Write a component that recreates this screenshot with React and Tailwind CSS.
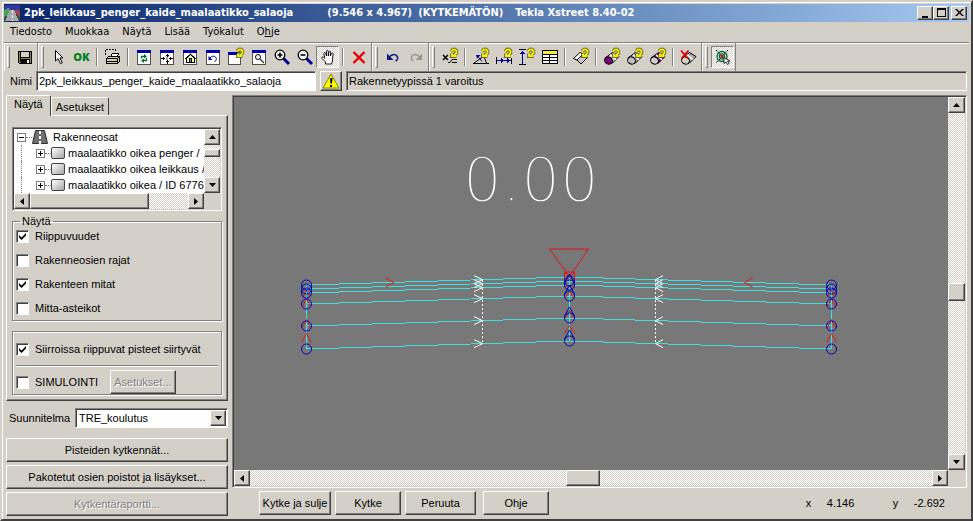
import { useState } from 'react';

const RAISED = 'border border-t-white border-l-white border-r-[#404040] border-b-[#404040] shadow-[inset_-1px_-1px_0_#808080]';
const SUNKEN = 'border border-t-[#808080] border-l-[#808080] border-r-white border-b-white shadow-[inset_1px_1px_0_#404040]';
const TRACK = 'bg-[repeating-conic-gradient(#ffffff_0_25%,#d4d0c8_0_50%)] bg-[length:2px_2px]';

/* ---------- icons ---------- */

function Icon({ children, size = 16, crisp = true }) {
  return (
    <svg
      width={size}
      height={size}
      viewBox="0 0 16 16"
      fill="none"
      stroke="#000"
      shapeRendering={crisp ? 'crispEdges' : 'auto'}
      aria-hidden="true"
      className="shrink-0 overflow-visible"
    >
      {children}
    </svg>
  );
}

// Small yellow query mark in the corner of many tool icons
function Query({ x = 8, y = 0 }) {
  const d = `M${x + 1} ${y + 2.5} L${x + 3} ${y + 0.5} H${x + 5} L${x + 6.5} ${y + 2} V${y + 4} L${x + 3.5} ${y + 7} H${x + 6.5} M${x + 2} ${y + 4.5} V${y + 7.5}`;
  return (
    <g shapeRendering="auto">
      <path d={d} stroke="#4a4a00" strokeWidth="3.4" />
      <path d={d} stroke="#f4ee10" strokeWidth="2" />
    </g>
  );
}

function WindowFrame({ children }) {
  return (
    <>
      <rect x="1.5" y="1.5" width="13" height="14" fill="#fff" stroke="#505050" />
      <rect x="1" y="1" width="14" height="3" fill="#0000a8" stroke="none" />
      {children}
    </>
  );
}

const SaveIcon = () => (
  <Icon>
    <path d="M1 2h14v13H2l-1-1z" fill="#000" stroke="none" />
    <path d="M2 3h1v10h1v1H2zM13 3h1v11h-1z" fill="#8a8a30" stroke="none" />
    <rect x="4" y="3" width="8" height="5" fill="#d4d0c8" stroke="none" />
    <rect x="4" y="9" width="9" height="1" fill="#8a8a30" stroke="none" />
    <rect x="10" y="11" width="2" height="3" fill="#fff" stroke="none" />
  </Icon>
);

const PointerIcon = () => (
  <Icon crisp={false}>
    <path d="M4.500 1.500V12l2.500-2.300 2.500 5 1.800-1-2.400-4.700H12z" fill="#fff" />
  </Icon>
);

const PrintIcon = () => (
  <Icon>
    <path d="M.5 6V.5h10V3" strokeDasharray="2 1" />
    <path d="M5.500 8 7.500 4.500h6L12 8" fill="#fff" />
    <path d="M1.500 9.500 3.500 7.500h11v5l-2 2h-11z" fill="#d4d0c8" />
    <path d="M1.500 9.500h11l2-2M12.500 9.500v5M2 12.500h10" />
    <rect x="10" y="10" width="2" height="2" fill="#e0d000" stroke="none" />
  </Icon>
);

const RefreshIcon = () => (
  <Icon>
    <WindowFrame>
      <g shapeRendering="auto" stroke="#007030" strokeWidth="1.300">
        <path d="M5.500 9.500V7.500h3M10.500 9v2.500h-3" />
        <path d="M8 5l3 2.500L8 9.500zM8 9.500l-3 2L8 14z" fill="#007030" stroke="none" />
      </g>
    </WindowFrame>
  </Icon>
);

const FitIcon = () => (
  <Icon>
    <WindowFrame>
      <path d="M8 4.500v3M8 11v4M2 9.500h4M10 9.500h4" />
      <path d="M6 7l2-2 2 2zM6 12l2 2 2-2zM5 7.500 3 9.500l2 2zM11 7.500l2 2-2 2z" fill="#000" stroke="none" />
      <path d="M6 7 10 12M10 7 6 12" stroke="#a0a0a0" strokeDasharray="1 1" />
    </WindowFrame>
  </Icon>
);

const HomeIcon = () => (
  <Icon>
    <WindowFrame>
      <path d="M4.500 9v4.500h8V9L8.500 5.500z" fill="#f0f0b0" />
      <path d="M3 10l5.500-5L14 10" shapeRendering="auto" />
      <rect x="7.500" y="9.500" width="2" height="4" fill="#808080" />
    </WindowFrame>
  </Icon>
);

const WindowUndoIcon = () => (
  <Icon>
    <WindowFrame>
      <g shapeRendering="auto">
        <path d="M5 9c1.500-2 4-2.500 5.500-1s1 4-1 4.500" stroke="#0000a0" />
        <path d="M3.500 7v4h4z" fill="#0000a0" stroke="none" />
      </g>
    </WindowFrame>
  </Icon>
);

const WindowQueryIcon = () => (
  <Icon>
    <rect x=".5" y="3.500" width="12" height="12" fill="#fff" stroke="#505050" />
    <rect x="0" y="3" width="10" height="3" fill="#0000a8" stroke="none" />
    <Query x={8} y={0} />
  </Icon>
);

const WindowZoomIcon = () => (
  <Icon>
    <WindowFrame>
      <circle cx="7" cy="8" r="2.500" shapeRendering="auto" />
      <path d="M9 10l4 4" stroke="#404040" strokeWidth="1.500" shapeRendering="auto" />
    </WindowFrame>
  </Icon>
);

function MagnifierIcon({ plus }) {
  return (
    <Icon crisp={false}>
      <path d="M9.500 9.500l5.500 5.500" stroke="#0000a0" strokeWidth="3" />
      <circle cx="6" cy="6" r="4.800" fill="#fff" strokeWidth="1.300" />
      <path d={plus ? 'M3.500 6h5M6 3.500v5' : 'M3.500 6h5'} strokeWidth="1.600" />
    </Icon>
  );
}

const HandIcon = () => (
  <Icon crisp={false}>
    <path
      d="M5.500 15v-2L2 9.500c-.8-1 .5-2 1.500-1.300l1.300 1.100L3.800 4.500c0-1.300 1.500-1.300 1.800-.2L6.500 7V2.500c0-1.300 1.800-1.300 1.800 0V7l.6-4c.2-1.200 1.800-1 1.700.2L10.300 7l1.200-2.500c.6-1 1.900-.5 1.600.6L12.500 10v2l-1 3z"
      fill="#fff"
      strokeWidth=".9"
    />
  </Icon>
);

const CrossIcon = () => (
  <Icon crisp={false}>
    <path d="M2.500 3l11 11M13.500 3l-11 11" stroke="#e80000" strokeWidth="2.400" />
  </Icon>
);

function ArrowBackIcon({ color, flip }) {
  return (
    <Icon crisp={false}>
      <g transform={flip ? 'matrix(-1 0 0 1 16 0)' : undefined} stroke={color}>
        <path d="M4 8.500c2-3 6-4 8-1.500 1.500 2 .3 4.200-1.500 5" strokeWidth="1.500" />
        <path d="M2 4.500v6.500h6.500z" fill={color} stroke="none" />
      </g>
    </Icon>
  );
}

const PointQueryIcon = () => (
  <Icon crisp={false}>
    <path d="M1 6l5 5M6 6l-5 5" strokeWidth="1.500" />
    <path d="M6 13.500h2L10 10.500h5M10 13.500h5" />
    <Query />
  </Icon>
);

const AngleQueryIcon = () => (
  <Icon crisp={false}>
    <path d="M0 14.500h16M1 14 11 7M11.500 9l2 5" />
    <path d="M5 7.500 9 12.500" stroke="#0000a0" />
    <path d="M3 6h4.500L4 9.500z" fill="#0000a0" stroke="none" />
    <Query />
  </Icon>
);

const WidthQueryIcon = () => (
  <Icon>
    <path d="M.5 8v7M15.500 9v6" />
    <path d="M1 11.500h14" stroke="#0000a0" />
    <path d="M5 9v5l3-2.500zM11 9v5l3-2.500z" fill="#0000a0" stroke="none" />
    <Query />
  </Icon>
);

const HeightQueryIcon = () => (
  <Icon>
    <path d="M0 .5h7M0 15.500h7" />
    <path d="M3.500 2v13" stroke="#0000a0" />
    <path d="M1 5h5L3.500 2z" fill="#0000a0" stroke="none" />
    <Query />
  </Icon>
);

const TableIcon = () => (
  <Icon>
    <rect x=".5" y="1.500" width="15" height="13" fill="#fff" />
    <rect x="1" y="2" width="14" height="3" fill="#f4ee40" stroke="none" />
    <path d="M0 5.500h16M0 8.500h16M0 11.500h16M7.500 5v10" />
  </Icon>
);

const PlaneQueryIcon = () => (
  <Icon crisp={false}>
    <path d="M.5 9.500 7 3.500l3 1.500-6 6z" fill="#fff" />
    <path d="M4 11 10 5l4.500 3.500L8 15z" fill="#c8c8c8" />
    <Query />
  </Icon>
);

function TubeIcon({ front, side, cross }) {
  return (
    <Icon crisp={false}>
      <path d="M1 9 8.500 3.500l6.500 4L8 14.500z" fill={side} />
      <path d="M6 6l6 4.500" stroke="#f0f0f0" strokeWidth="1.800" />
      <ellipse cx="4.500" cy="11.500" rx="4" ry="3.500" fill={front} transform="rotate(30 4.500 11.500)" />
      {cross ? <path d="M0 1.500l7 8M7.500 1.500l-7 8" stroke="#e00000" strokeWidth="1.800" /> : <Query />}
    </Icon>
  );
}

const TargetIcon = () => (
  <Icon crisp={false}>
    <path d="M1 1l12 13M13 1L1 14" strokeDasharray="2 1" />
    <circle cx="7" cy="7.500" r="5" stroke="#006838" strokeWidth="1.300" />
    <circle cx="7" cy="7.500" r="2.600" stroke="#006838" strokeWidth="1.300" />
    <circle cx="7" cy="7.500" r="1.400" fill="#e00000" stroke="none" />
    <path d="M9 8.500v6l2-1.500 1.500 2.500 1.500-1-1.500-2.500H15z" fill="#fff" strokeWidth=".8" />
  </Icon>
);

const RoadIcon = () => (
  <Icon size={16}>
    <path d="M3.500 1.500h9l3 13H.5z" fill="#707070" stroke="#303030" shapeRendering="auto" />
    <path d="M8 2v13" stroke="#fff" strokeWidth="2" strokeDasharray="3 2" />
  </Icon>
);

const AppIcon = () => (
  <Icon>
    <rect width="16" height="16" fill="#305048" stroke="none" />
    <path d="M0 0h16v5H0z" fill="#3038a0" stroke="none" />
    <path d="M0 5l4-2 4 3v3l-8 3z" fill="#48a060" stroke="none" />
    <path d="M9 6l5-2 2 3v5z" fill="#a04050" stroke="none" />
    <path d="M6 5h4l5 11H1z" fill="#a8a8a8" stroke="none" />
    <path d="M8 5v11" stroke="#fff" strokeDasharray="3 2" />
  </Icon>
);

const WarningIcon = () => (
  <svg width="18" height="16" viewBox="0 0 18 16" aria-hidden="true">
    <path d="M9 1 17 15H1z" fill="#ffff00" stroke="#808000" />
    <path d="M8 5h2.500L10 10.500H8.500zM8 12h2v2H8z" fill="#000" />
  </svg>
);

/* ---------- building blocks ---------- */

function ToolGroup({ children }) {
  return (
    <div className="flex h-7 items-center border-r border-l border-r-[#808080] border-l-white pr-px pl-0.5">
      <span className="mr-[3px] h-[22px] w-[3px] border border-t-white border-r-[#808080] border-b-[#808080] border-l-white" />
      {children}
    </div>
  );
}

function Tool({ label, pressed, children }) {
  return (
    <button
      type="button"
      aria-label={label}
      className={`flex h-[22px] w-[23px] items-center justify-center ${
        pressed ? `border border-t-[#808080] border-r-white border-b-white border-l-[#808080] ${TRACK}` : ''
      }`}
    >
      {children}
    </button>
  );
}

const Divider = () => <span className="mx-[3px] h-[18px] w-0.5 border-r border-l border-r-white border-l-[#808080]" />;

const ARROWS = {
  up: 'M0 4h7L3.500 0z',
  down: 'M0 0h7L3.500 4z',
  left: 'M4 0v7L0 3.500z',
  right: 'M0 0v7l4-3.500z',
};

function Arrow({ dir }) {
  const vertical = dir === 'up' || dir === 'down';
  return (
    <svg width={vertical ? 7 : 4} height={vertical ? 4 : 7} aria-hidden="true">
      <path d={ARROWS[dir]} />
    </svg>
  );
}

function ArrowButton({ dir }) {
  return (
    <button type="button" aria-label={dir} className={`flex h-4 min-w-4 shrink-0 items-center justify-center bg-[#d4d0c8] ${RAISED}`}>
      <Arrow dir={dir} />
    </button>
  );
}

function PushButton({ children, className = '', disabled }) {
  return (
    <button
      type="button"
      disabled={disabled}
      className={`h-6 bg-[#d4d0c8] text-center whitespace-nowrap ${RAISED} ${disabled ? 'text-[#808080] [text-shadow:1px_1px_0_#fff]' : ''} ${className}`}
    >
      {children}
    </button>
  );
}

function Check({ label, defaultChecked }) {
  return (
    <label className="flex h-6 items-center gap-1.5">
      <span className="grid h-[13px] w-[13px] shrink-0 place-items-center">
        <input
          type="checkbox"
          defaultChecked={defaultChecked}
          className={`peer col-start-1 row-start-1 h-[13px] w-[13px] appearance-none bg-white ${SUNKEN}`}
        />
        <svg
          width="7"
          height="7"
          viewBox="0 0 7 7"
          className="pointer-events-none z-10 col-start-1 row-start-1 hidden peer-checked:block"
          aria-hidden="true"
        >
          <path d="M0 2l2.500 2.500L7 0v2.500L2.500 7 0 4.500z" />
        </svg>
      </span>
      {label}
    </label>
  );
}

/* ---------- drawing area ---------- */

const LINES = [
  [285.5, 277.5],
  [289.5, 281.5],
  [293.5, 285.5],
  [304.5, 296.5],
  [326.5, 318.5],
  [349.5, 341.5],
];
const MID = 569.5;
const LEFT = 306.5;
const RIGHT = 831.5;

function CrossSection() {
  return (
    <svg viewBox="234 98 714 372" className="h-full w-full" fill="none" role="img" aria-label="Poikkileikkaus">
      {/* thin outline in the background colour keeps the digits hairline thin */}
      <text
        x="463"
        y="201"
        fill="#fff"
        stroke="#787878"
        strokeWidth="1.3"
        fontSize="61"
        fontWeight="200"
        fontFamily="'DejaVu Sans Light', 'DejaVu Sans', sans-serif"
      >
        0.00
      </text>

      <g stroke="#40e0e0" shapeRendering="crispEdges">
        {LINES.map(([side, mid]) => (
          <path key={side} d={`M${LEFT} ${side}L${MID} ${mid}L${RIGHT} ${side}`} />
        ))}
        <path d={`M${LEFT} 286V349M${MID} 278V341M${RIGHT} 286V349`} />
      </g>

      {/* mittaviivat */}
      <g stroke="#fff">
        <path d="M482.500 280V344M655.500 280V344" strokeDasharray="2 2" shapeRendering="crispEdges" />
        {LINES.map(([side, mid]) => {
          const y = side + (mid - side) * 0.67;
          return <path key={side} d={`M474 ${y - 4}l8.500 4l-8.500 4M663 ${y - 4}l-7.500 4l7.500 4`} />;
        })}
      </g>

      <g stroke="#e01414">
        <path d="M385.500 278.500l8 4.500-8 4.500M752.500 278.500l-8 4.500 8 4.500" />
        <path d="M549.500 249.500h39L571 275h-3z" />
        <path d="M564.500 272.500h10v14h-10zM564.500 272.500l10 10M574.500 272.500l-10 10" />
        {[LEFT, RIGHT].map((x) => (
          <path key={x} d={`M${x - 5} 343l5-9 5 9M${x - 4} 328l4-8 4 8M${x - 4} 307l4-8 4 8M${x - 4} 297l4-6 4 6`} />
        ))}
        <path d={`M${MID - 5} 334l5-8 5 8M${MID - 4} 318l4-7 4 7M${MID - 4} 298l4-6 4 6`} />
      </g>

      <g stroke="#0000b8">
        {LINES.map(([side, mid], i) => (
          <g key={side}>
            <circle cx={LEFT} cy={side} r="5" />
            <circle cx={RIGHT} cy={side} r="5" />
            {i > 0 && <circle cx={MID} cy={mid} r="5" />}
            {i > 1 && <path d={`M${MID - 5} ${mid - 2}l5-9 5 9`} />}
          </g>
        ))}
      </g>
    </svg>
  );
}

/* ---------- page ---------- */

const MENU = ['Tiedosto', 'Muokkaa', 'Näytä', 'Lisää', 'Työkalut'];
const TREE = ['maalaatikko oikea penger /', 'maalaatikko oikea leikkaus /', 'maalaatikko oikea / ID 6776'];

function TitleBar() {
  return (
    <header className="flex h-[18px] items-center bg-linear-to-r from-[#0a246a] to-[#a6caf0] pr-0.5 font-['DejaVu_Sans_Condensed','DejaVu_Sans',sans-serif] text-[11px] font-bold text-white">
      <AppIcon />
      <h1 className="ml-1 flex flex-1 whitespace-pre">
        <span>2pk_leikkaus_penger_kaide_maalaatikko_salaoja</span>
        <span className="ml-[34px]">(9.546 x 4.967)</span>
        <span className="ml-1.5">(KYTKEMÄTÖN)</span>
        <span className="ml-3">Tekla Xstreet 8.40-02</span>
      </h1>
      <div className="flex">
        {[
          ['Pienennä', 'M1 8h6v2H1z'],
          ['Suurenna', 'M0 0h9v9H0zM1 2v6h7V2z'],
          ['Sulje', 'M0 1h2l2.500 2.500L7 1h2L5.500 4.500 9 8H7L4.500 5.500 2 8H0l3.500-3.500z'],
        ].map(([label, d]) => (
          <button
            key={label}
            type="button"
            aria-label={label}
            className={`flex h-3.5 w-4 items-center justify-center bg-[#d4d0c8] last:ml-0.5 ${RAISED}`}
          >
            <svg width="9" height="10" fillRule="evenodd" aria-hidden="true">
              <path d={d} />
            </svg>
          </button>
        ))}
      </div>
    </header>
  );
}

function Toolbar() {
  return (
    <div className="flex border-t border-[#808080] shadow-[inset_0_1px_0_#fff]" role="toolbar">
      <ToolGroup>
        <Tool label="Tallenna"><SaveIcon /></Tool>
      </ToolGroup>
      <ToolGroup>
        <Tool label="Valitse"><PointerIcon /></Tool>
        <Tool>
          <span className="font-['Open_Sans',sans-serif] text-[11px] font-extrabold text-[#008020]">OK</span>
        </Tool>
        <Divider />
        <Tool label="Tulosta"><PrintIcon /></Tool>
        <Divider />
        <Tool label="Päivitä"><RefreshIcon /></Tool>
        <Tool label="Sovita"><FitIcon /></Tool>
        <Tool label="Alkunäkymä"><HomeIcon /></Tool>
        <Tool label="Edellinen näkymä"><WindowUndoIcon /></Tool>
        <Tool label="Näkymän tiedot"><WindowQueryIcon /></Tool>
        <Tool label="Zoomaa ikkuna"><WindowZoomIcon /></Tool>
        <Tool label="Lähennä"><MagnifierIcon plus /></Tool>
        <Tool label="Loitonna"><MagnifierIcon /></Tool>
        <Tool label="Siirrä näkymää" pressed><HandIcon /></Tool>
        <Divider />
        <Tool label="Poista"><CrossIcon /></Tool>
      </ToolGroup>
      <ToolGroup>
        <Tool label="Kumoa"><ArrowBackIcon color="#101880" /></Tool>
        <Tool label="Tee uudelleen"><ArrowBackIcon color="#989890" flip /></Tool>
      </ToolGroup>
      <ToolGroup>
        <Tool label="Piste"><PointQueryIcon /></Tool>
        <Divider />
        <Tool label="Kulma"><AngleQueryIcon /></Tool>
        <Tool label="Leveys"><WidthQueryIcon /></Tool>
        <Tool label="Korkeus"><HeightQueryIcon /></Tool>
        <Tool label="Taulukko"><TableIcon /></Tool>
        <Divider />
        <Tool label="Pinta"><PlaneQueryIcon /></Tool>
        <Divider />
        <Tool label="Osan pää"><TubeIcon front="#800080" side="#c8c8c8" /></Tool>
        <Tool label="Osa"><TubeIcon front="#c0c0c0" side="#a0a0a0" /></Tool>
        <Tool label="Osan pinta"><TubeIcon front="#d0d0d0" side="#800080" /></Tool>
        <Divider />
        <Tool label="Poista osa"><TubeIcon front="#d4d0c8" side="#a8a8a8" cross /></Tool>
      </ToolGroup>
      <ToolGroup>
        <Tool label="Kohdista" pressed><TargetIcon /></Tool>
      </ToolGroup>
    </div>
  );
}

function Expander({ open }) {
  return (
    <svg width="9" height="9" className="shrink-0" shapeRendering="crispEdges" aria-hidden="true">
      <rect x=".5" y=".5" width="8" height="8" fill="#fff" stroke="#808080" />
      <path d={open ? 'M2 4.500h5' : 'M2 4.500h5M4.500 2v5'} stroke="#000" />
    </svg>
  );
}

function Tree() {
  return (
    <div className={`grid grid-cols-[1fr_16px] bg-[#d4d0c8] p-px ${SUNKEN}`}>
      <ul className="h-16 overflow-hidden bg-white whitespace-nowrap">
        <li className="flex h-4 items-center pl-[3px]">
          <Expander open />
          <span className="w-1.5 shrink-0 border-t border-dotted border-[#808080]" />
          <RoadIcon />
          <span className="ml-[5px]">Rakenneosat</span>
        </li>
        {TREE.map((name) => (
          <li key={name} className="ml-[7px] flex h-4 items-center border-l border-dotted border-[#808080] pl-3.5">
            <Expander />
            <span className="w-1.5 shrink-0 border-t border-dotted border-[#808080]" />
            <span className="h-3 w-3.5 shrink-0 rounded-xs border border-[#404040] bg-linear-to-br from-white to-[#a8a8a8]" />
            <span className="ml-[3px]">{name}</span>
          </li>
        ))}
      </ul>
      <div className={`flex flex-col ${TRACK}`}>
        <ArrowButton dir="up" />
        <div className="flex-1 pt-1">
          <div className={`h-2 bg-[#d4d0c8] ${RAISED}`} />
        </div>
        <ArrowButton dir="down" />
      </div>
      <div className={`flex ${TRACK}`}>
        <ArrowButton dir="left" />
        <div className="flex-1">
          <div className={`h-4 w-3/4 bg-[#d4d0c8] ${RAISED}`} />
        </div>
        <ArrowButton dir="right" />
      </div>
    </div>
  );
}

const ETCHED = 'border border-[#808080] shadow-[1px_1px_0_#fff,inset_1px_1px_0_#fff]';

function Sidebar() {
  const [tab, setTab] = useState('Näytä');

  return (
    <aside className="flex w-[222px] shrink-0 flex-col pb-px">
      <div className="flex items-end" role="tablist">
        {['Näytä', 'Asetukset'].map((name) => (
          <button
            key={name}
            type="button"
            role="tab"
            aria-selected={tab === name}
            onClick={() => setTab(name)}
            className={`rounded-t-xs border-t border-r border-l border-t-white border-r-[#404040] border-l-white ${
              tab === name ? 'z-10 -mb-px h-[21px] bg-[#d4d0c8] px-[7px] pb-1' : 'h-[18px] px-1'
            }`}
          >
            {name}
          </button>
        ))}
      </div>

      <div className={`flex flex-1 flex-col px-[5px] pt-[11px] pb-[5px] ${RAISED}`}>
        <Tree />

        <fieldset className={`mt-[3px] px-[3px] pb-0 ${ETCHED}`}>
          <legend className="ml-1 px-0.5 leading-[14px]">Näytä</legend>
          <div className="-mt-1">
            <Check label="Riippuvuudet" defaultChecked />
            <Check label="Rakenneosien rajat" />
            <Check label="Rakenteen mitat" defaultChecked />
            <Check label="Mitta-asteikot" />
          </div>
        </fieldset>

        <div className={`mt-2.5 flex flex-1 flex-col px-[3px] pt-[5px] ${ETCHED}`}>
          <Check label="Siirroissa riippuvat pisteet siirtyvät" defaultChecked />
          <hr className="my-1 border-t border-[#808080] shadow-[0_1px_0_#fff]" />
          <div className="flex items-center gap-3">
            <Check label="SIMULOINTI" />
            <PushButton disabled className="w-[66px]">Asetukset...</PushButton>
          </div>
        </div>
      </div>

      <div className="flex items-center justify-between py-[7px] pl-[3px]">
        <label htmlFor="plan">Suunnitelma</label>
        <div className={`relative w-[153px] bg-white ${SUNKEN}`}>
          <select id="plan" className="block h-[18px] w-full appearance-none pl-[3px] outline-none">
            <option>TRE_koulutus</option>
          </select>
          <span className={`pointer-events-none absolute top-px right-px bottom-px flex w-4 items-center justify-center bg-[#d4d0c8] ${RAISED}`}>
            <Arrow dir="down" />
          </span>
        </div>
      </div>

      <div className="flex flex-col gap-[3px] pt-[3px]">
        <PushButton>Pisteiden kytkennät...</PushButton>
        <PushButton>Pakotetut osien poistot ja lisäykset...</PushButton>
        <PushButton disabled>Kytkentäraportti...</PushButton>
      </div>
    </aside>
  );
}

function Viewport() {
  return (
    <div className={`grid min-h-0 flex-1 grid-cols-[1fr_17px] grid-rows-[1fr_16px] p-px ${SUNKEN}`}>
      <div className="min-h-0 overflow-hidden bg-[#787878]">
        <CrossSection />
      </div>
      <div className={`flex flex-col justify-between ${TRACK}`}>
        <ArrowButton dir="up" />
        <div className={`mt-4 h-[18px] bg-[#d4d0c8] ${RAISED}`} />
        <ArrowButton dir="down" />
      </div>
      <div className={`flex items-center justify-between ${TRACK}`}>
        <ArrowButton dir="left" />
        <div className={`mr-4 h-4 w-[34px] bg-[#d4d0c8] ${RAISED}`} />
        <ArrowButton dir="right" />
      </div>
    </div>
  );
}

export default function App() {
  return (
    <div className="flex h-screen min-h-[521px] flex-col border-2 border-t-[#d4d0c8] border-r-[#404040] border-b-[#404040] border-l-[#d4d0c8] bg-[#d4d0c8] p-0.5 font-['Liberation_Sans',Arial,sans-serif] text-[11px] leading-[14px] text-black shadow-[inset_1px_1px_0_#fff]">
      <TitleBar />

      <nav className="flex h-5 items-center gap-[13px] px-1.5 font-['DejaVu_Sans_Condensed','DejaVu_Sans',sans-serif]">
        {MENU.map((item) => (
          <button key={item} type="button">{item}</button>
        ))}
        <button type="button">O<u>h</u>je</button>
      </nav>

      <Toolbar />

      <div className="flex items-center gap-1 pr-0.5 pl-1.5">
        <label htmlFor="nimi" className="w-[22px]">Nimi</label>
        <input
          id="nimi"
          defaultValue="2pk_leikkaus_penger_kaide_maalaatikko_salaoja"
          className={`h-5 w-[280px] bg-white px-0.5 outline-none ${SUNKEN}`}
        />
        <button type="button" aria-label="Varoitus" className={`flex h-5 w-[22px] items-center justify-center ${RAISED}`}>
          <WarningIcon />
        </button>
        <p className={`h-5 flex-1 px-0.5 leading-[18px] ${SUNKEN}`}>Rakennetyypissä 1 varoitus</p>
      </div>

      <div className="flex min-h-0 flex-1 gap-1 px-0.5 pt-1 pb-0.5">
        <Sidebar />
        <main className="flex min-w-0 flex-1 flex-col">
          <Viewport />
          <footer className="flex items-center pt-[3px] pl-[27px]">
            <PushButton className="mr-1 w-[72px]">Kytke ja sulje</PushButton>
            <PushButton className="mr-1 w-[66px]">Kytke</PushButton>
            <PushButton className="mr-[7px] w-[71px]">Peruuta</PushButton>
            <PushButton className="w-[66px]">Ohje</PushButton>
            <dl className="ml-auto flex pr-[22px]">
              <dt className="w-[21px]">x</dt>
              <dd className="w-[66px]">4.146</dd>
              <dt className="w-[21px]">y</dt>
              <dd>-2.692</dd>
            </dl>
          </footer>
        </main>
      </div>
    </div>
  );
}
